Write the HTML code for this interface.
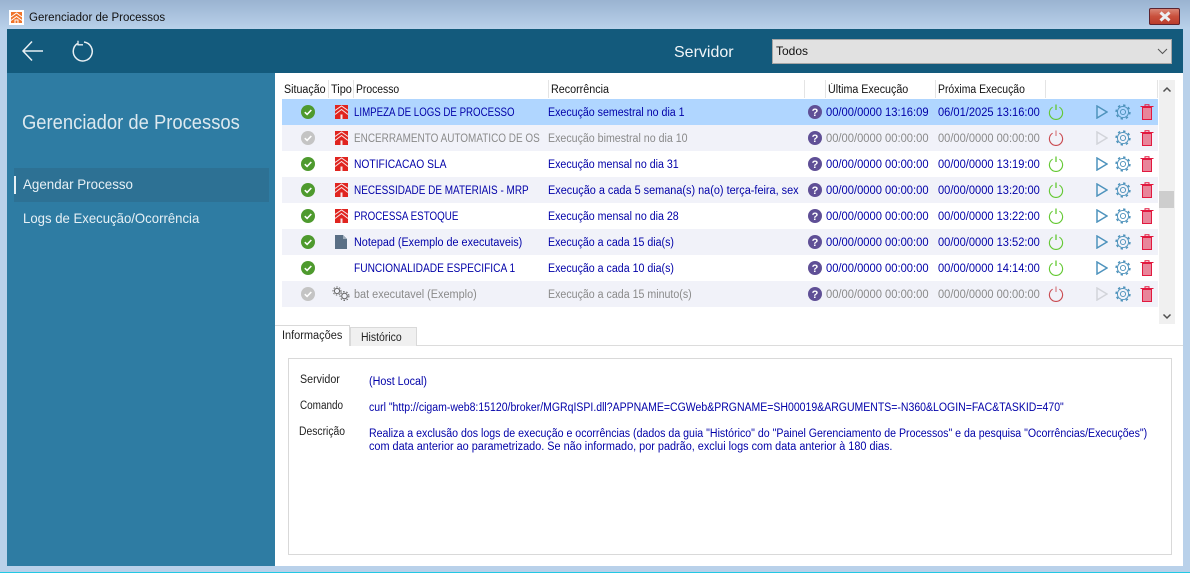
<!DOCTYPE html>
<html lang="pt-BR"><head><meta charset="utf-8"><title>Gerenciador de Processos</title>
<style>
html,body{margin:0;padding:0;width:1190px;height:573px;overflow:hidden;background:#b9d1ea}
body{position:relative;font-family:"Liberation Sans",sans-serif;font-size:11.5px;color:#000}
div,span,svg{position:absolute;white-space:nowrap}
span{transform-origin:0 0}
#tb{left:0;top:0;width:1190px;height:29px;background:linear-gradient(#9ab3d1,#b9d1ea)}
#hd{left:7px;top:29px;width:1176px;height:44px;background:#135a7c}
#sd{left:7px;top:73px;width:268px;height:493px;background:#2e7ca3}
#mn{left:275px;top:73px;width:908px;height:493px;background:#fff}
#cy{left:0;top:572px;width:1190px;height:1px;background:#22c8e4}
.r{left:282px;width:876px;height:26px;background:#fff}
.a{background:#f1f2f9}.s{background:#b0d6ff}
.t{top:7px;line-height:14px;color:#0000a8}
.g .t{color:#8a8a8a}
.p{left:72px}.c{left:266px;transform:scaleX(.925)}.u{left:544px;transform:scaleX(.972)}.n{left:656px;transform:scaleX(.965)}
.th{top:83px;line-height:14px;color:#111}
.sep{top:80px;width:1px;height:18px;background:#e4e4e4}
.lb{color:#222;line-height:14px}
.v{color:#0000a8;line-height:14px}
</style></head><body>
<svg width="0" height="0" style="left:0;top:0">
<defs>
<symbol id="ok" viewBox="0 0 14 14"><circle cx="7" cy="7" r="7" fill="#4e9a2e"/><path d="M3.800 7.200l2.300 2.200 4.200-4.400" fill="none" stroke="#fff" stroke-width="1.600"/></symbol>
<symbol id="off" viewBox="0 0 14 14"><circle cx="7" cy="7" r="7" fill="#c4c4c4"/><path d="M3.800 7.200l2.300 2.200 4.200-4.400" fill="none" stroke="#fff" stroke-width="1.600"/></symbol>
<symbol id="home" viewBox="0 0 13 14"><rect width="13" height="14" fill="#e0241f"/><path d="M0 5.500L6.500 1 13 5.500M0 9.500L6.500 4.500 13 9.500" fill="none" stroke="#f6e8e8" stroke-width="1"/><rect x="5.500" y="9.500" width="2" height="4.500" fill="#f6e8e8"/></symbol>
<symbol id="q" viewBox="0 0 14 14"><circle cx="7" cy="7" r="7" fill="#5f4f96"/><text x="7" y="11" font-family="Liberation Sans" font-size="11" font-weight="bold" text-anchor="middle" fill="#fff">?</text></symbol>
<symbol id="pw" viewBox="0 0 16 16"><path d="M4.600 3.200A6.600 6.600 0 1 0 11.400 3.200" fill="none" stroke="#63c832" stroke-width="1.100"/><path d="M8 .5V6" stroke="#63c832" stroke-width="1.300"/></symbol>
<symbol id="pr" viewBox="0 0 16 16"><path d="M4.600 3.200A6.600 6.600 0 1 0 11.400 3.200" fill="none" stroke="#c94a50" stroke-width="1.100"/><path d="M8 .5V6" stroke="#d9878b" stroke-width="1.300"/></symbol>
<symbol id="pl" viewBox="0 0 12 14"><path d="M1 1L11 7 1 13Z" fill="#fff" fill-opacity=".15" stroke="#4e93bd" stroke-width="1.500"/></symbol>
<symbol id="pd" viewBox="0 0 12 14"><path d="M1 1L11 7 1 13Z" fill="none" stroke="#d2d4da" stroke-width="1.500"/></symbol>
<symbol id="gr" viewBox="0 0 16 16"><circle cx="8" cy="8" r="5.600" fill="none" stroke="#4a90ba" stroke-width=".9"/><circle cx="8" cy="8" r="2.600" fill="none" stroke="#4a90ba" stroke-width=".9"/><circle cx="8" cy="8" r="6.900" fill="none" stroke="#4a90ba" stroke-width="1.500" stroke-dasharray="2.400 3"/></symbol>
<symbol id="tr" viewBox="0 0 14 16"><rect x="2.500" y="3.500" width="9" height="12" fill="#e8859a" stroke="#e2193f"/><path d="M.5 2.500H13.500M5 2.500V.7H9V2.500" fill="none" stroke="#e2193f"/></symbol>
<symbol id="doc" viewBox="0 0 12 14"><path d="M0 0H8L12 4V14H0Z" fill="#5a6f85"/><path d="M8 0V4H12" fill="#9eacba"/></symbol>
<symbol id="cg" viewBox="0 0 18 15"><circle cx="5" cy="5" r="2.600" fill="none" stroke="#666" stroke-width="1"/><circle cx="5" cy="5" r="4" fill="none" stroke="#666" stroke-width="1" stroke-dasharray="1.400 1.600"/><circle cx="12.500" cy="10" r="2.800" fill="none" stroke="#666" stroke-width="1.100"/><circle cx="12.500" cy="10" r="4.400" fill="none" stroke="#666" stroke-width="1.100" stroke-dasharray="1.500 1.700"/></symbol>
</defs></svg>

<div id="tb"></div>
<svg style="left:9px;top:10px" width="15" height="15" viewBox="0 0 15 15"><rect width="15" height="15" fill="#fff"/><rect x="2" y="2" width="11" height="11" fill="#f0742a"/><path d="M2 7L7.500 3 13 7M2 10.500L7.500 6.500 13 10.500M6 13V10H9V13" fill="none" stroke="#fff" stroke-width="1"/></svg>
<span style="left:29px;top:11px;font-size:11.5px;line-height:14px;color:#111">Gerenciador de Processos</span>
<div style="left:1149px;top:8px;width:31px;height:17px;border-radius:2px;background:linear-gradient(#dc8d7d,#c9503c 50%,#b83a2a);box-shadow:inset 0 0 0 1px #5c2430"></div>
<svg style="left:1158px;top:11px" width="14" height="11" viewBox="0 0 14 11"><path d="M2.500 1.500L11.500 9.500M11.500 1.500L2.500 9.500" stroke="#eceff2" stroke-width="3"/></svg>

<div id="hd"></div>
<svg style="left:21px;top:40px" width="23" height="22" viewBox="0 0 23 22"><path d="M11 1.500L2 11l9 9.500M2 11H22" fill="none" stroke="#e8eff3" stroke-width="1.500"/></svg>
<svg style="left:70px;top:40px" width="24" height="22" viewBox="0 0 24 22"><path d="M7.500 3.500A9.500 9.500 0 1 0 14 2" fill="none" stroke="#e8eff3" stroke-width="1.500"/><path d="M8 .8V4.800H13" fill="none" stroke="#e8eff3" stroke-width="1.300"/></svg>
<span style="left:674px;top:43px;font-size:16px;line-height:19px;color:#f0f5f8">Servidor</span>
<div style="left:772px;top:39px;width:398px;height:23px;background:#e1e1e1;border:1px solid #a6a6a6"></div>
<span style="left:776px;top:44px;font-size:12px;line-height:15px;color:#111">Todos</span>
<svg style="left:1157px;top:48px" width="11" height="7" viewBox="0 0 11 7"><path d="M1 1l4.500 4.500L10 1" fill="none" stroke="#555" stroke-width="1"/></svg>

<div id="sd"></div>
<span style="left:22px;top:111px;font-size:20px;line-height:24px;color:#dde9ef;transform:scaleX(.92)">Gerenciador de Processos</span>
<div style="left:14px;top:168px;width:255px;height:34px;background:#2d7194"></div>
<div style="left:14px;top:176px;width:2px;height:18px;background:#e6f0f5"></div>
<span style="left:23px;top:176px;font-size:14px;line-height:17px;color:#e6f0f5;transform:scaleX(.955)">Agendar Processo</span>
<span style="left:23px;top:210px;font-size:14px;line-height:17px;color:#e6f0f5;transform:scaleX(.94)">Logs de Execução/Ocorrência</span>

<div id="mn"></div>
<span class="th" style="left:284px;transform:scaleX(.93)">Situação</span>
<span class="th" style="left:331px;transform:scaleX(.95)">Tipo</span>
<span class="th" style="left:356px;transform:scaleX(.9)">Processo</span>
<span class="th" style="left:551px;transform:scaleX(.935)">Recorrência</span>
<span class="th" style="left:828px;transform:scaleX(.93)">Última Execução</span>
<span class="th" style="left:938px;transform:scaleX(.906)">Próxima Execução</span>
<div class="sep" style="left:328px"></div><div class="sep" style="left:353px"></div><div class="sep" style="left:548px"></div><div class="sep" style="left:804px"></div><div class="sep" style="left:825px"></div><div class="sep" style="left:935px"></div><div class="sep" style="left:1045px"></div><div class="sep" style="left:1157px"></div>

<div class="r s" style="top:99px"><svg style="left:19px;top:6px" width="14" height="14"><use href="#ok"/></svg><svg style="left:53px;top:6px" width="13" height="14"><use href="#home"/></svg><span class="t p" style="transform:scaleX(.843)">LIMPEZA DE LOGS DE PROCESSO</span><span class="t c">Execução semestral no dia 1</span><svg style="left:526px;top:6px" width="14" height="14"><use href="#q"/></svg><span class="t u">00/00/0000 13:16:09</span><span class="t n">06/01/2025 13:16:00</span><svg style="left:766px;top:5px" width="16" height="16"><use href="#pw"/></svg><svg style="left:814px;top:6px" width="12" height="14"><use href="#pl"/></svg><svg style="left:833px;top:5px" width="16" height="16"><use href="#gr"/></svg><svg style="left:858px;top:5px" width="14" height="16"><use href="#tr"/></svg></div>

<div class="r a g" style="top:125px"><svg style="left:19px;top:6px" width="14" height="14"><use href="#off"/></svg><svg style="left:53px;top:6px" width="13" height="14"><use href="#home"/></svg><span class="t p" style="transform:scaleX(.865)">ENCERRAMENTO AUTOMATICO DE OS</span><span class="t c">Execução bimestral no dia 10</span><svg style="left:526px;top:6px" width="14" height="14"><use href="#q"/></svg><span class="t u">00/00/0000 00:00:00</span><span class="t n">00/00/0000 00:00:00</span><svg style="left:766px;top:5px" width="16" height="16"><use href="#pr"/></svg><svg style="left:814px;top:6px" width="12" height="14"><use href="#pd"/></svg><svg style="left:833px;top:5px" width="16" height="16"><use href="#gr"/></svg><svg style="left:858px;top:5px" width="14" height="16"><use href="#tr"/></svg></div>

<div class="r" style="top:151px"><svg style="left:19px;top:6px" width="14" height="14"><use href="#ok"/></svg><svg style="left:53px;top:6px" width="13" height="14"><use href="#home"/></svg><span class="t p" style="transform:scaleX(.894)">NOTIFICACAO SLA</span><span class="t c">Execução mensal no dia 31</span><svg style="left:526px;top:6px" width="14" height="14"><use href="#q"/></svg><span class="t u">00/00/0000 00:00:00</span><span class="t n">00/00/0000 13:19:00</span><svg style="left:766px;top:5px" width="16" height="16"><use href="#pw"/></svg><svg style="left:814px;top:6px" width="12" height="14"><use href="#pl"/></svg><svg style="left:833px;top:5px" width="16" height="16"><use href="#gr"/></svg><svg style="left:858px;top:5px" width="14" height="16"><use href="#tr"/></svg></div>

<div class="r a" style="top:177px"><svg style="left:19px;top:6px" width="14" height="14"><use href="#ok"/></svg><svg style="left:53px;top:6px" width="13" height="14"><use href="#home"/></svg><span class="t p" style="transform:scaleX(.866)">NECESSIDADE DE MATERIAIS - MRP</span><span class="t c" style="transform:scaleX(.947)">Execução a cada 5 semana(s) na(o) terça-feira, sex</span><svg style="left:526px;top:6px" width="14" height="14"><use href="#q"/></svg><span class="t u">00/00/0000 00:00:00</span><span class="t n">00/00/0000 13:20:00</span><svg style="left:766px;top:5px" width="16" height="16"><use href="#pw"/></svg><svg style="left:814px;top:6px" width="12" height="14"><use href="#pl"/></svg><svg style="left:833px;top:5px" width="16" height="16"><use href="#gr"/></svg><svg style="left:858px;top:5px" width="14" height="16"><use href="#tr"/></svg></div>

<div class="r" style="top:203px"><svg style="left:19px;top:6px" width="14" height="14"><use href="#ok"/></svg><svg style="left:53px;top:6px" width="13" height="14"><use href="#home"/></svg><span class="t p" style="transform:scaleX(.852)">PROCESSA ESTOQUE</span><span class="t c">Execução mensal no dia 28</span><svg style="left:526px;top:6px" width="14" height="14"><use href="#q"/></svg><span class="t u">00/00/0000 00:00:00</span><span class="t n">00/00/0000 13:22:00</span><svg style="left:766px;top:5px" width="16" height="16"><use href="#pw"/></svg><svg style="left:814px;top:6px" width="12" height="14"><use href="#pl"/></svg><svg style="left:833px;top:5px" width="16" height="16"><use href="#gr"/></svg><svg style="left:858px;top:5px" width="14" height="16"><use href="#tr"/></svg></div>

<div class="r a" style="top:229px"><svg style="left:19px;top:6px" width="14" height="14"><use href="#ok"/></svg><svg style="left:53px;top:6px" width="12" height="14"><use href="#doc"/></svg><span class="t p" style="transform:scaleX(.94)">Notepad (Exemplo de executaveis)</span><span class="t c">Execução a cada 15 dia(s)</span><svg style="left:526px;top:6px" width="14" height="14"><use href="#q"/></svg><span class="t u">00/00/0000 00:00:00</span><span class="t n">00/00/0000 13:52:00</span><svg style="left:766px;top:5px" width="16" height="16"><use href="#pw"/></svg><svg style="left:814px;top:6px" width="12" height="14"><use href="#pl"/></svg><svg style="left:833px;top:5px" width="16" height="16"><use href="#gr"/></svg><svg style="left:858px;top:5px" width="14" height="16"><use href="#tr"/></svg></div>

<div class="r" style="top:255px"><svg style="left:19px;top:6px" width="14" height="14"><use href="#ok"/></svg><span class="t p" style="transform:scaleX(.885)">FUNCIONALIDADE ESPECIFICA 1</span><span class="t c">Execução a cada 10 dia(s)</span><svg style="left:526px;top:6px" width="14" height="14"><use href="#q"/></svg><span class="t u">00/00/0000 00:00:00</span><span class="t n">00/00/0000 14:14:00</span><svg style="left:766px;top:5px" width="16" height="16"><use href="#pw"/></svg><svg style="left:814px;top:6px" width="12" height="14"><use href="#pl"/></svg><svg style="left:833px;top:5px" width="16" height="16"><use href="#gr"/></svg><svg style="left:858px;top:5px" width="14" height="16"><use href="#tr"/></svg></div>

<div class="r a g" style="top:281px"><svg style="left:19px;top:6px" width="14" height="14"><use href="#off"/></svg><svg style="left:50px;top:5px" width="18" height="15"><use href="#cg"/></svg><span class="t p" style="transform:scaleX(.946)">bat executavel (Exemplo)</span><span class="t c">Execução a cada 15 minuto(s)</span><svg style="left:526px;top:6px" width="14" height="14"><use href="#q"/></svg><span class="t u">00/00/0000 00:00:00</span><span class="t n">00/00/0000 00:00:00</span><svg style="left:766px;top:5px" width="16" height="16"><use href="#pr"/></svg><svg style="left:814px;top:6px" width="12" height="14"><use href="#pd"/></svg><svg style="left:833px;top:5px" width="16" height="16"><use href="#gr"/></svg><svg style="left:858px;top:5px" width="14" height="16"><use href="#tr"/></svg></div>

<div style="left:1159px;top:80px;width:16px;height:244px;background:#f0f0f0"></div>
<div style="left:1159px;top:191px;width:15px;height:17px;background:#cdcdcd"></div>
<svg style="left:1162px;top:86px" width="10" height="7" viewBox="0 0 10 7"><path d="M1.500 5.500L5 2l3.500 3.500" fill="none" stroke="#505050" stroke-width="1.500"/></svg>
<svg style="left:1162px;top:313px" width="10" height="7" viewBox="0 0 10 7"><path d="M1.500 1.500L5 5l3.500-3.500" fill="none" stroke="#505050" stroke-width="1.500"/></svg>

<div style="left:275px;top:345px;width:908px;height:1px;background:#dcdcdc"></div>
<div style="left:350px;top:327px;width:65px;height:18px;background:#f0f0f0;border:1px solid #d9d9d9;border-bottom:0"></div>
<div style="left:275px;top:325px;width:75px;height:21px;background:#fff;border-top:1px solid #d9d9d9;border-right:1px solid #d9d9d9;box-sizing:border-box"></div>
<span class="lb" style="left:282px;top:329px;transform:scaleX(.953)">Informações</span>
<span class="lb" style="left:361px;top:331px;transform:scaleX(.91)">Histórico</span>

<div style="left:288px;top:358px;width:882px;height:195px;border:1px solid #d9d9d9"></div>
<span class="lb" style="left:300px;top:373px;transform:scaleX(.93)">Servidor</span>
<span class="lb" style="left:300px;top:399px;transform:scaleX(.863)">Comando</span>
<span class="lb" style="left:299px;top:425px;transform:scaleX(.9)">Descrição</span>
<span class="v" style="left:369px;top:375px;transform:scaleX(.935)">(Host Local)</span>
<span class="v" style="left:369px;top:401px;transform:scaleX(.913)">curl "http://cigam-web8:15120/broker/MGRqISPI.dll?APPNAME=CGWeb&amp;PRGNAME=SH00019&amp;ARGUMENTS=-N360&amp;LOGIN=FAC&amp;TASKID=470"</span>
<span class="v" style="left:369px;top:427px;transform:scaleX(.922)">Realiza a exclusão dos logs de execução e ocorrências (dados da guia "Histórico" do "Painel Gerenciamento de Processos" e da pesquisa "Ocorrências/Execuções")</span>
<span class="v" style="left:369px;top:440px;transform:scaleX(.9455)">com data anterior ao parametrizado. Se não informado, por padrão, exclui logs com data anterior à 180 dias.</span>
<div id="cy"></div>
</body></html>
